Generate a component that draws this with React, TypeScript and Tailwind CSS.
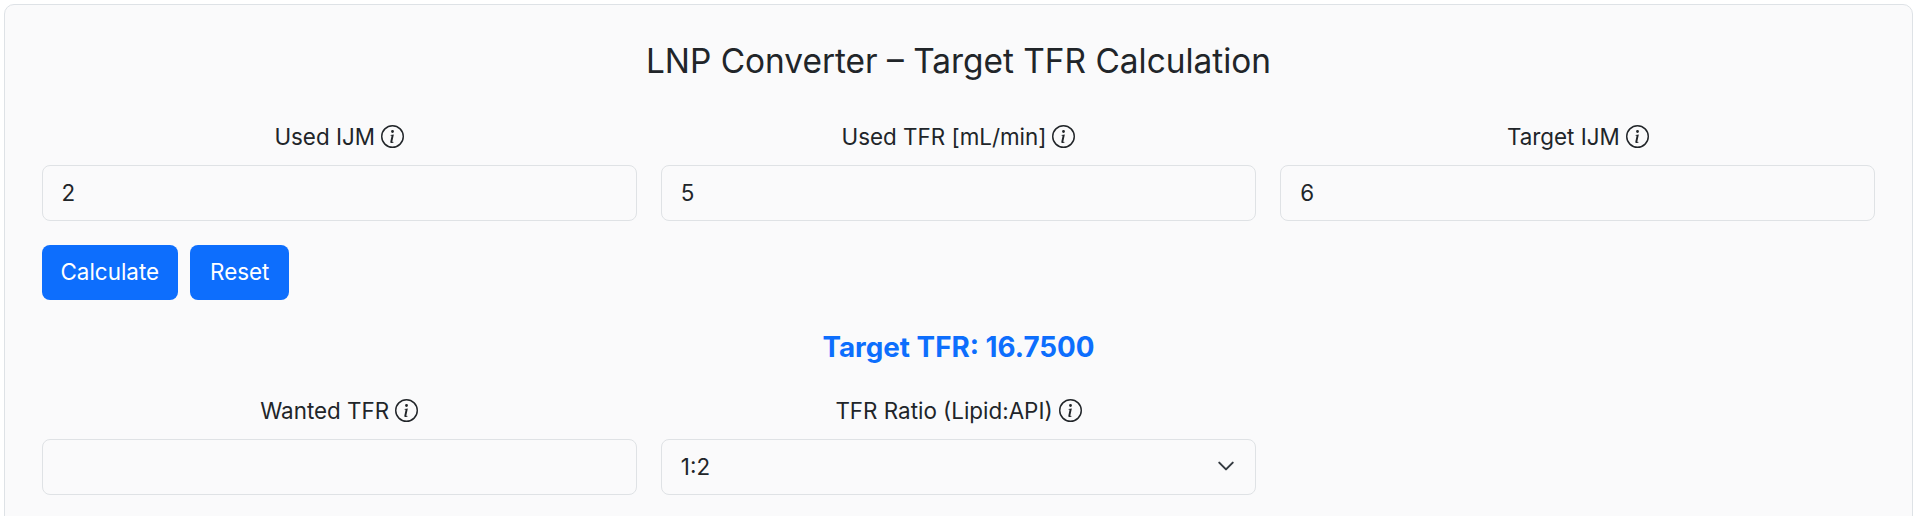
import { BsInfoCircle } from "react-icons/bs";

const fieldClass =
  "h-[55.5px] w-full rounded-[8px] border border-[#dfe2e5] bg-[#fafafb] px-[19px] text-[22.4px] text-[#212529] outline-none";

function FieldLabel({ text }: { text: string }) {
  return (
    <label className="mb-[14px] flex h-[29px] items-center justify-center gap-[6px] text-[22.4px] text-[#212529]">
      {text}
      <BsInfoCircle className="h-[23px] w-[23px]" />
    </label>
  );
}

function TextField({ label, value }: { label: string; value: string }) {
  return (
    <div>
      <FieldLabel text={label} />
      <input type="text" readOnly value={value} className={fieldClass} />
    </div>
  );
}

export default function App() {
  return (
    <div className="h-[516px] overflow-hidden bg-white pl-[4px] pr-[7px] pt-[4px] font-['Inter',sans-serif]">
      <div className="h-[560px] rounded-[10px] border border-[#dee2e6] bg-[#fafafb] px-[36.5px] pt-[36px]">
        <h3 className="mb-[40px] text-center text-[33.4px] font-normal leading-[41px] text-[#212529]">
          LNP Converter – Target TFR Calculation
        </h3>

        <div className="grid grid-cols-3 gap-x-[24px]">
          <TextField label="Used IJM" value="2" />
          <TextField label="Used TFR [mL/min]" value="5" />
          <TextField label="Target IJM" value="6" />
        </div>

        <div className="mt-[24px] flex gap-[12px]">
          <button className="h-[55.5px] rounded-[8px] bg-[#0d6efd] px-[19px] text-[22.4px] text-white">
            Calculate
          </button>
          <button className="h-[55.5px] rounded-[8px] bg-[#0d6efd] px-[20px] text-[22.4px] text-white">
            Reset
          </button>
        </div>

        <div className="mt-[29px] text-center text-[27.8px] font-bold leading-[36px] text-[#0d6efd]">
          Target TFR: 16.7500
        </div>

        <div className="mt-[31px] grid grid-cols-3 gap-x-[24px]">
          <TextField label="Wanted TFR" value="" />
          <div>
            <FieldLabel text="TFR Ratio (Lipid:API)" />
            <div className="relative">
              <select className={`${fieldClass} appearance-none`} defaultValue="1:2">
                <option>1:2</option>
                <option>1:1</option>
                <option>1:3</option>
              </select>
              <svg
                viewBox="0 0 16 16"
                className="pointer-events-none absolute right-[21px] top-[18px] h-[18px] w-[18px]"
                fill="none"
                stroke="#343a40"
                strokeWidth="1.8"
                strokeLinecap="round"
                strokeLinejoin="round"
              >
                <path d="m2 5 6 6 6-6" />
              </svg>
            </div>
          </div>
        </div>
      </div>
    </div>
  );
}
